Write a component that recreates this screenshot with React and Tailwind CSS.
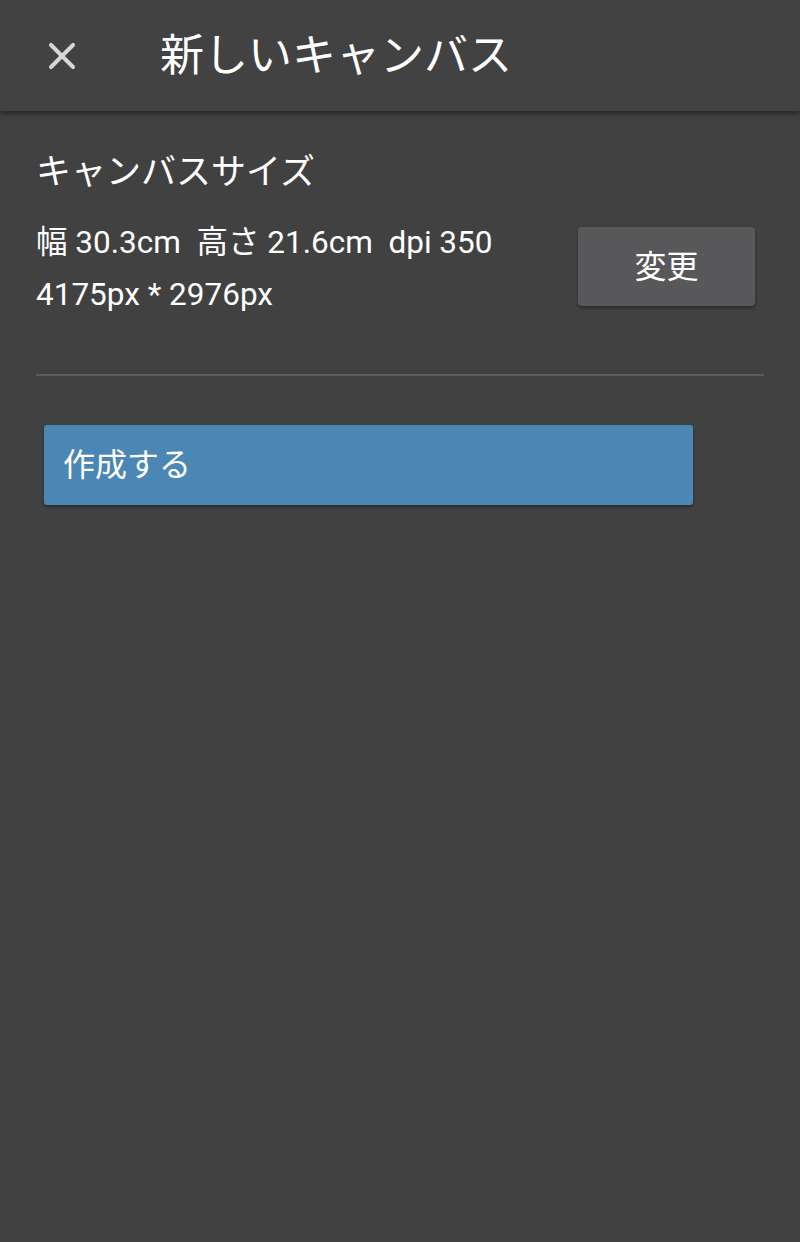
import { X } from "lucide-react";

const font = { fontFamily: 'Roboto, "Noto Sans CJK JP", sans-serif' };

function Header() {
  return (
    <div className="relative z-10 flex h-[111px] items-center bg-[#424242] shadow-[0_3px_4px_rgba(0,0,0,0.35)]">
      <button className="ml-[40px] flex h-[44px] w-[44px] items-center justify-center text-[#d6d6d6]">
        <X size={44} strokeWidth={2.2} />
      </button>
      <h1 className="ml-[76px] text-[44px] leading-none text-white">新しいキャンバス</h1>
    </div>
  );
}

export default function App() {
  return (
    <div style={font} className="flex min-h-[1242px] w-[800px] flex-col bg-[#414141] text-white">
      <Header />
      <div className="px-[36px] pt-[44px]">
        <h2 className="text-[35px] leading-none">キャンバスサイズ</h2>
        <div className="mt-[41px] flex items-start justify-between">
          <div className="-mt-[14px] text-[31.5px] leading-[52px]">
            <div className="whitespace-pre">幅 30.3cm  高さ 21.6cm  dpi 350</div>
            <div>4175px * 2976px</div>
          </div>
          <button className="mr-[9px] -mt-[4px] flex h-[79px] w-[177px] items-center justify-center rounded-[4px] bg-[#58585a] text-[32px] text-white shadow-[0_2px_3px_rgba(0,0,0,0.35)]">
            変更
          </button>
        </div>
        <div className="mt-[53px] h-[2px] w-[728px] bg-[#5c5c5c]" />
        <button className="ml-[8px] mt-[49px] flex h-[80px] w-[649px] items-center rounded-[3px] bg-[#4a87b4] pl-[19px] text-[32px] text-white shadow-[0_2px_3px_rgba(0,0,0,0.35)]">
          作成する
        </button>
      </div>
    </div>
  );
}
